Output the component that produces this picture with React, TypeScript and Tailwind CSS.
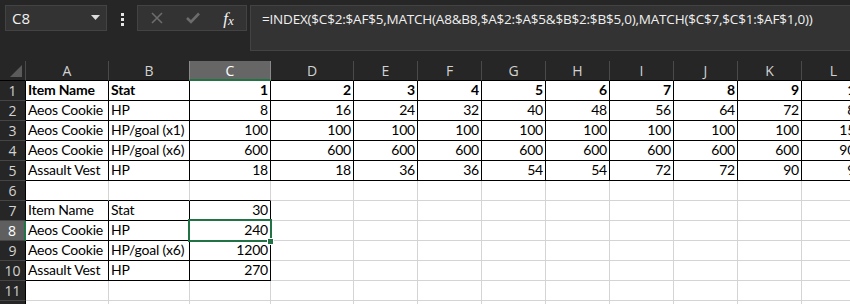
import React from 'react'

const COLS = ['A', 'B', 'C', 'D', 'E', 'F', 'G', 'H', 'I', 'J', 'K', 'L']

type Cell = string | number | null

const ROWS: Cell[][] = [
  ['Item Name', 'Stat', 1, 2, 3, 4, 5, 6, 7, 8, 9, 10],
  ['Aeos Cookie', 'HP', 8, 16, 24, 32, 40, 48, 56, 64, 72, 80],
  ['Aeos Cookie', 'HP/goal (x1)', 100, 100, 100, 100, 100, 100, 100, 100, 100, 150],
  ['Aeos Cookie', 'HP/goal (x6)', 600, 600, 600, 600, 600, 600, 600, 600, 600, 900],
  ['Assault Vest', 'HP', 18, 18, 36, 36, 54, 54, 72, 72, 90, 90],
  [],
  ['Item Name', 'Stat', 30],
  ['Aeos Cookie', 'HP', 240],
  ['Aeos Cookie', 'HP/goal (x6)', 1200],
  ['Assault Vest', 'HP', 270],
  [],
  [],
]

// rows are 1-based, cols 0-based (A = 0)
const bordered = (r: number, c: number) =>
  (r >= 1 && r <= 5 && c <= 11) || (r >= 7 && r <= 10 && c <= 2)

function NameBox() {
  return (
    <div className="ml-[5px] flex h-[26px] w-[102px] items-center justify-between border border-[#434343] bg-[#333333] pl-[6px] pr-[6px]">
      <span className="text-[15px] text-[#f0f0f0]">C8</span>
      <svg width="9" height="6" viewBox="0 0 9 6">
        <path d="M0 0 L9 0 L4.5 5 Z" fill="#dcdcdc" />
      </svg>
    </div>
  )
}

function FormulaButtons() {
  return (
    <div className="flex h-[26px] w-[110px] items-center border border-[#434343] bg-[#333333]">
      <div className="flex w-[36px] justify-center pl-[2px]">
        <svg width="12" height="12" viewBox="0 0 12 12">
          <path d="M1 1 L11 11 M11 1 L1 11" stroke="#6c6c6c" strokeWidth="1.6" />
        </svg>
      </div>
      <div className="flex w-[36px] justify-center pl-[2px]">
        <svg width="14" height="12" viewBox="0 0 14 12">
          <path d="M1 6 L5 10 L13 1.5" stroke="#6c6c6c" strokeWidth="2.6" fill="none" />
        </svg>
      </div>
      <div className="flex w-[36px] justify-center pl-[1px] font-['Liberation_Serif',serif] italic text-[#f2f2f2]">
        <span className="text-[17px] leading-none">f</span>
        <span className="mt-[4px] text-[13px] leading-none">x</span>
      </div>
    </div>
  )
}

export default function App() {
  return (
    <div className="h-[304px] w-[850px] overflow-hidden bg-[#262626] font-['Open_Sans',sans-serif]">
      {/* formula bar */}
      <div className="flex h-[61px] items-start pt-[5px]">
        <NameBox />
        <div className="ml-[14px] mr-[13px] mt-[8px] flex flex-col gap-[2px]">
          <div className="h-[3px] w-[3px] bg-[#e6e6e6]" />
          <div className="h-[3px] w-[3px] bg-[#e6e6e6]" />
          <div className="h-[3px] w-[3px] bg-[#e6e6e6]" />
        </div>
        <FormulaButtons />
        <div className="ml-[3px] h-[46px] flex-1 border border-[#434343] border-r-0 bg-[#333333] pl-[11px] pt-[3px] text-[13.5px] tracking-[-0.2px] text-[#f0f0f0]">
          =INDEX($C$2:$AF$5,MATCH(A8&amp;B8,$A$2:$A$5&amp;$B$2:$B$5,0),MATCH($C$7,$C$1:$AF$1,0))
        </div>
      </div>

      {/* sheet */}
      <div className="relative grid w-[866px] grid-cols-[26px_83px_81px_81px_83px_64px_64px_64px_64px_64px_64px_64px_64px] auto-rows-[20px]">
        {/* header row */}
        <div className="relative border-b border-r border-b-black border-r-[#4a4a4a] bg-[#262626]">
          <svg className="absolute right-[3px] bottom-[3px]" width="12" height="12" viewBox="0 0 12 12">
            <path d="M12 0 L12 12 L0 12 Z" fill="#5b5b5b" />
          </svg>
        </div>
        {COLS.map((c, i) =>
          i === 2 ? (
            <div
              key={c}
              className="-ml-[1px] flex items-center justify-center border-b-2 border-l border-r border-b-[#217346] border-l-[#8a8a8a] border-r-[#8a8a8a] bg-[#666666] text-[14px] text-[#ffffff]"
            >
              {c}
            </div>
          ) : (
            <div
              key={c}
              className="flex items-center justify-center border-b border-r border-b-black border-r-[#4a4a4a] bg-[#262626] text-[14px] text-[#d2d2d2]"
            >
              {c}
            </div>
          )
        )}

        {/* data rows */}
        {ROWS.map((row, ri) => {
          const r = ri + 1
          const selRow = r === 8
          return (
            <React.Fragment key={r}>
              <div
                className={
                  'flex items-center justify-center border-b border-b-[#454545] text-[14px] ' +
                  (selRow
                    ? 'border-r-2 border-r-[#217346] bg-[#5f5f5f] text-[#ffffff]'
                    : 'border-r border-r-black bg-[#262626] text-[#d2d2d2]')
                }
              >
                {r}
              </div>
              {COLS.map((_, c) => {
                const v = row[c] ?? null
                const right = bordered(r, c) || bordered(r, c + 1)
                const bottom = bordered(r, c) || bordered(r + 1, c)
                const isNum = typeof v === 'number'
                return (
                  <div
                    key={c}
                    className={
                      'flex items-end overflow-hidden whitespace-nowrap border-b border-r bg-white pb-[1px] font-[Lato,sans-serif] text-[14px] leading-[18px] tracking-[-0.2px] text-black ' +
                      (right ? 'border-r-black ' : 'border-r-[#d4d4d4] ') +
                      (bottom ? 'border-b-black ' : 'border-b-[#d4d4d4] ') +
                      (isNum ? 'justify-end pr-[2px] ' : 'justify-start pl-[2px] ') +
                      (r === 1 ? 'font-bold' : '')
                    }
                  >
                    {v}
                  </div>
                )
              })}
            </React.Fragment>
          )
        })}

        {/* selected cell C8 */}
        <div className="pointer-events-none absolute left-[188px] top-[158px] h-[23px] w-[84px] border-2 border-[#217346]" />
        <div className="pointer-events-none absolute left-[267px] top-[177px] h-[7px] w-[7px] border border-white bg-[#217346]" />
      </div>
    </div>
  )
}
